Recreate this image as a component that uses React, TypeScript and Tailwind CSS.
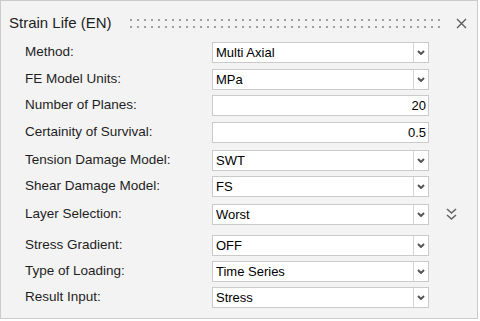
import React from 'react';

type Row = {
  label: string;
  value: string;
  kind: 'select' | 'number';
  gap: string;
  more?: boolean;
};

const rows: Row[] = [
  { label: 'Method:', value: 'Multi Axial', kind: 'select', gap: 'mt-[9px]' },
  { label: 'FE Model Units:', value: 'MPa', kind: 'select', gap: 'mt-[6px]' },
  { label: 'Number of Planes:', value: '20', kind: 'number', gap: 'mt-[5px]' },
  { label: 'Certainity of Survival:', value: '0.5', kind: 'number', gap: 'mt-[6px]' },
  { label: 'Tension Damage Model:', value: 'SWT', kind: 'select', gap: 'mt-[7px]' },
  { label: 'Shear Damage Model:', value: 'FS', kind: 'select', gap: 'mt-[5px]' },
  { label: 'Layer Selection:', value: 'Worst', kind: 'select', gap: 'mt-[7px]', more: true },
  { label: 'Stress Gradient:', value: 'OFF', kind: 'select', gap: 'mt-[10px]' },
  { label: 'Type of Loading:', value: 'Time Series', kind: 'select', gap: 'mt-[5px]' },
  { label: 'Result Input:', value: 'Stress', kind: 'select', gap: 'mt-[5px]' },
];

function Chevron() {
  return (
    <svg width="8" height="5" viewBox="0 0 8 5">
      <polyline points="1,1 4,4 7,1" fill="none" stroke="#555" strokeWidth="2" />
    </svg>
  );
}

function Field({ row }: { row: Row }) {
  if (row.kind === 'number') {
    return (
      <div className="w-[217px] h-[21px] border border-[#cacaca] bg-white flex items-center justify-end pr-[2px] text-[13px] text-black">
        {row.value}
      </div>
    );
  }
  return (
    <div className="w-[217px] h-[21px] border border-[#cacaca] bg-white flex items-stretch text-[13px] text-black">
      <div className="flex-1 flex items-center pl-[3px]">{row.value}</div>
      <div className="w-[15px] border-l border-[#d4d4d4] flex items-center justify-center">
        <Chevron />
      </div>
    </div>
  );
}

export default function App() {
  return (
    <div className="w-[480px] h-[321px] bg-white" style={{ fontFamily: '"Liberation Sans", Arial, sans-serif' }}>
      <div className="w-[478px] h-[319px] border border-[#cbcbcb] bg-[#f3f3f3] flex flex-col">
        {/* header */}
        <div className="mt-3 h-[20px] flex items-center pl-2 pr-[10px]">
          <span className="text-[15px] leading-[20px] text-[#1e1e1e] whitespace-nowrap">Strain Life (EN)</span>
          <div className="flex-1 ml-[18px] mr-[12px] h-[9px]">
            <svg width="100%" height="9">
              <defs>
                <pattern id="grip" width="7" height="7" patternUnits="userSpaceOnUse">
                  <rect x="0" y="0" width="2" height="2" fill="#a0a0a0" />
                </pattern>
              </defs>
              <rect x="0" y="0" width="100%" height="9" fill="url(#grip)" />
            </svg>
          </div>
          <svg width="11" height="11" viewBox="0 0 11 11">
            <path d="M1 1 L10 10 M10 1 L1 10" stroke="#5a5a5a" strokeWidth="1.3" />
          </svg>
        </div>

        {rows.map((row) => (
          <div key={row.label} className={`${row.gap} flex items-center pl-[24px]`}>
            <div className="w-[187px] text-[13.5px] text-[#1e1e1e] whitespace-nowrap">{row.label}</div>
            <Field row={row} />
            {row.more && (
              <svg className="ml-[17px]" width="11" height="13" viewBox="0 0 11 13">
                <polyline points="1,1 5.5,5 10,1" fill="none" stroke="#666" strokeWidth="1.6" />
                <polyline points="1,7 5.5,11 10,7" fill="none" stroke="#666" strokeWidth="1.6" />
              </svg>
            )}
          </div>
        ))}
      </div>
    </div>
  );
}
